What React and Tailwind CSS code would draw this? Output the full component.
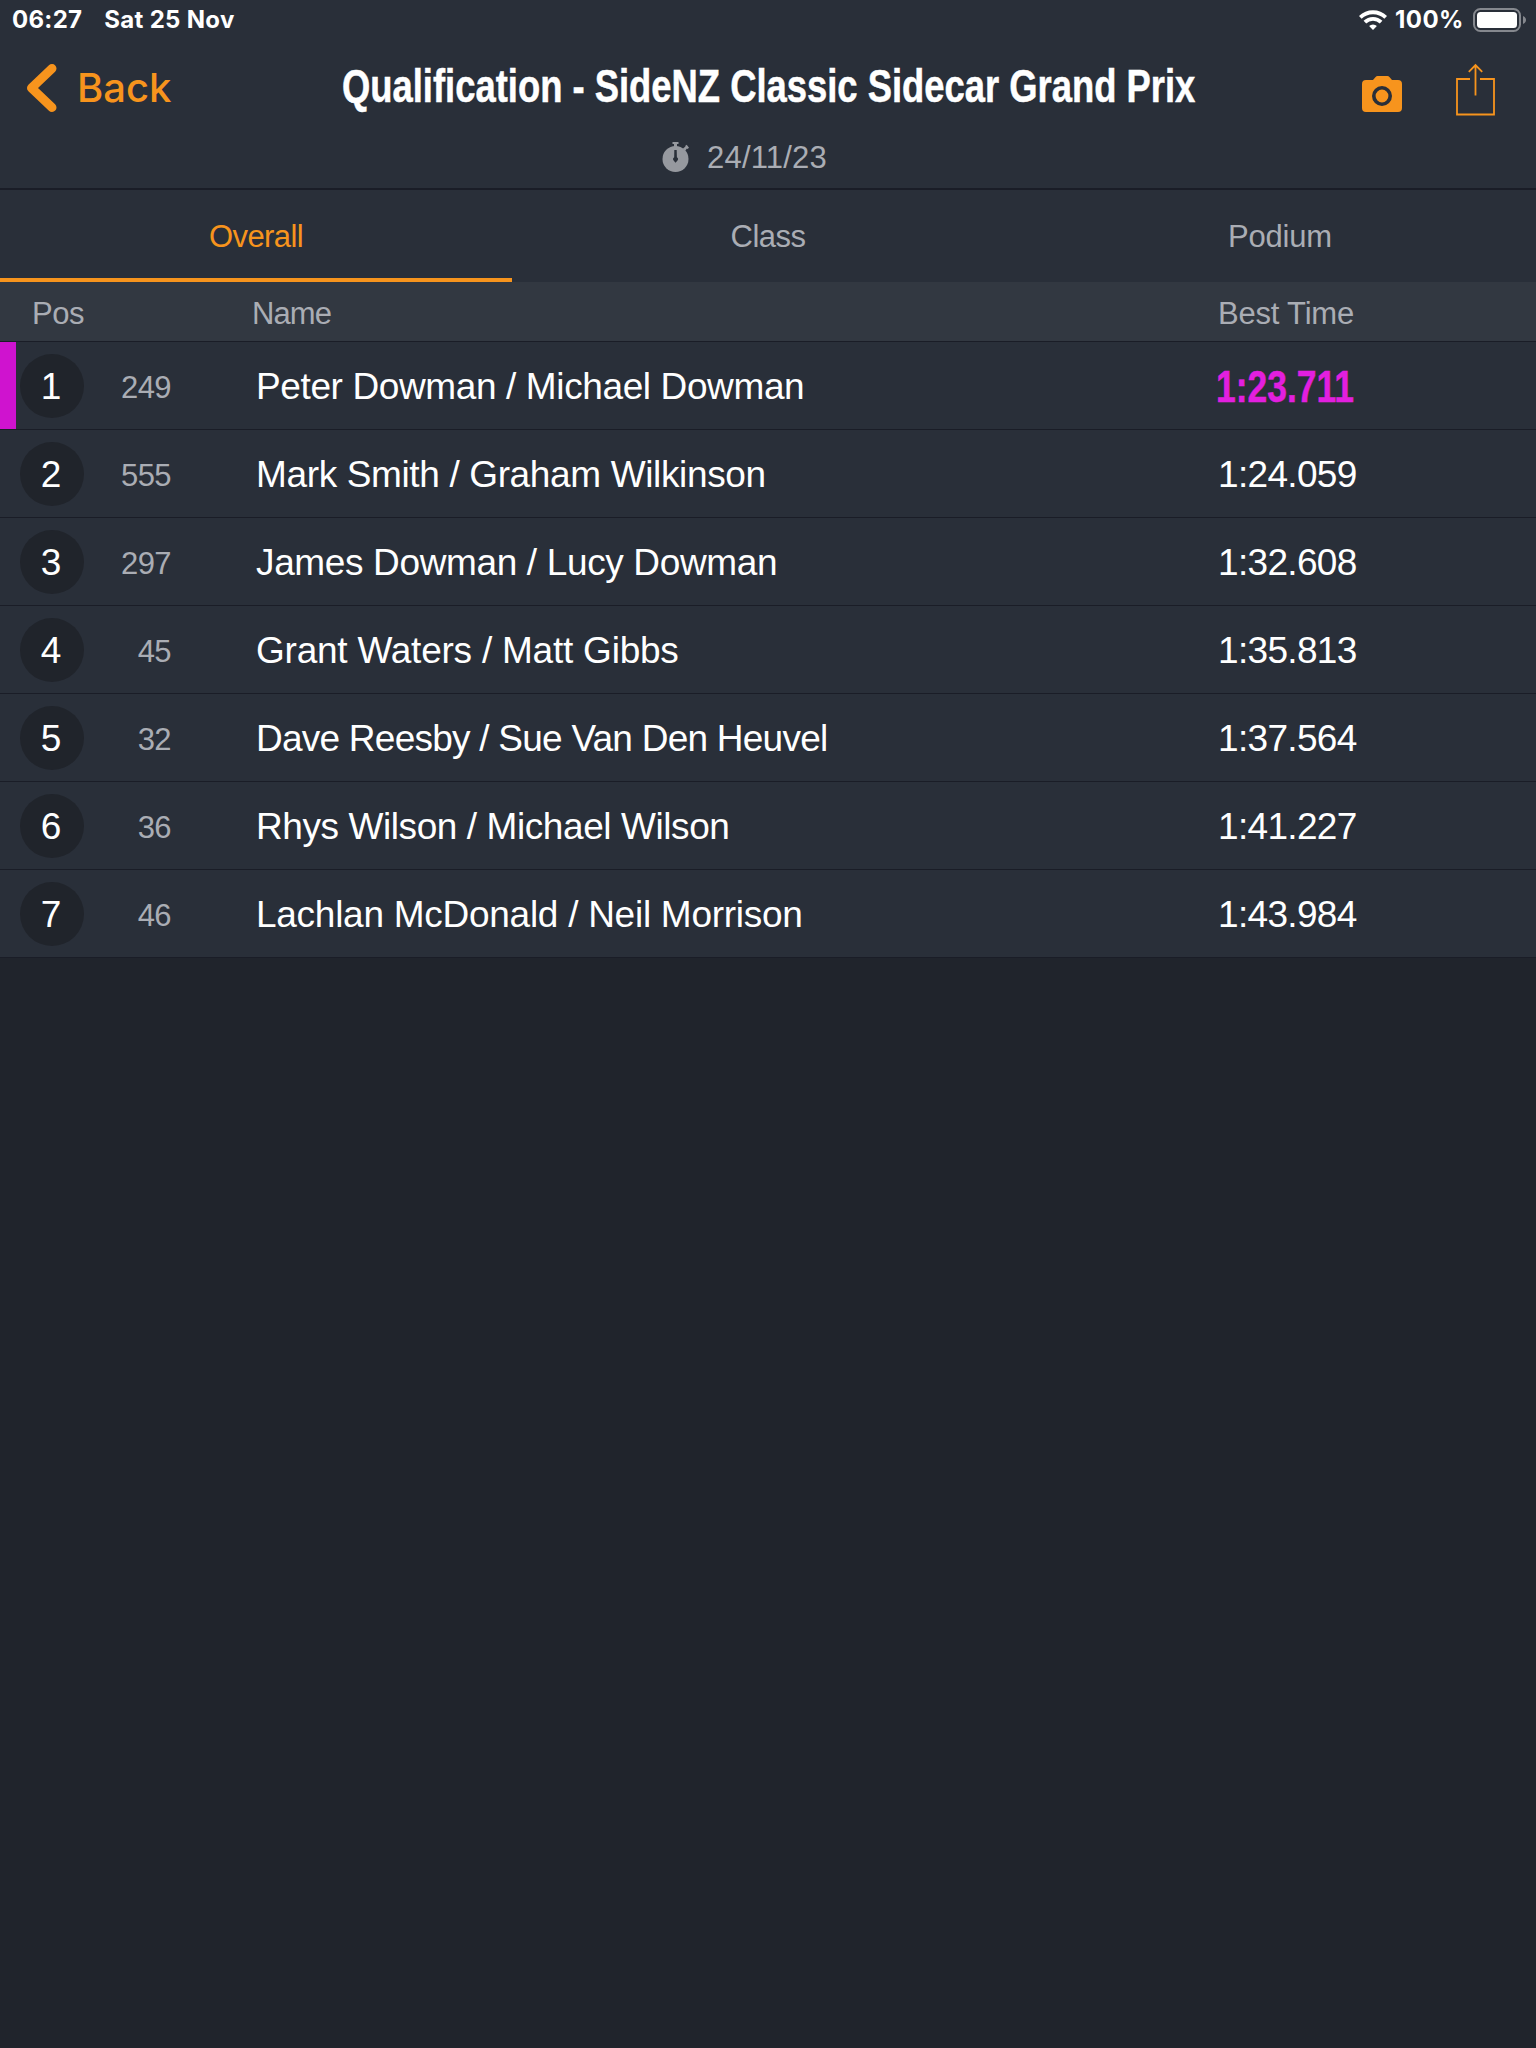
import React, { useState } from 'react';
import clsx from 'clsx';

const TABS = [
  { label: 'Overall', tracking: 'tracking-[-0.6px]' },
  { label: 'Class', tracking: 'tracking-[-0.55px]' },
  { label: 'Podium', tracking: 'tracking-[-0.2px]' },
];

const RESULTS = [
  { pos: 1, number: 249, name: 'Peter Dowman / Michael Dowman', time: '1:23.711', tracking: 'tracking-[-0.38px]', fastest: true },
  { pos: 2, number: 555, name: 'Mark Smith / Graham Wilkinson', time: '1:24.059', tracking: 'tracking-[-0.36px]' },
  { pos: 3, number: 297, name: 'James Dowman / Lucy Dowman', time: '1:32.608', tracking: 'tracking-[-0.36px]' },
  { pos: 4, number: 45, name: 'Grant Waters / Matt Gibbs', time: '1:35.813', tracking: 'tracking-[-0.23px]' },
  { pos: 5, number: 32, name: 'Dave Reesby / Sue Van Den Heuvel', time: '1:37.564', tracking: 'tracking-[-0.76px]' },
  { pos: 6, number: 36, name: 'Rhys Wilson / Michael Wilson', time: '1:41.227', tracking: 'tracking-[-0.42px]' },
  { pos: 7, number: 46, name: 'Lachlan McDonald / Neil Morrison', time: '1:43.984', tracking: 'tracking-[-0.27px]' },
];

const WifiIcon = () => (
  <svg width="28" height="20" viewBox="0 0 28 20" fill="none" stroke="#fff" strokeWidth="3.8">
    <path d="M1.3 7.4a18.2 18.2 0 0 1 25.4 0" />
    <path d="M5.9 12.1a11.6 11.6 0 0 1 16.2 0" />
    <path d="M14 20l-3.9-4a5.6 5.6 0 0 1 7.8 0z" fill="#fff" stroke="none" />
  </svg>
);

const BatteryIcon = () => (
  <svg width="54" height="24" viewBox="0 0 54 24" fill="none">
    <rect x="1" y="1" width="46" height="22" rx="6.5" stroke="#85888e" strokeWidth="2" />
    <rect x="4" y="4" width="40" height="16" rx="3.5" fill="#fff" />
    <path d="M50 8c1.8.7 3 2.2 3 4s-1.2 3.3-3 4z" fill="#85888e" />
  </svg>
);

const CameraIcon = () => (
  <svg width="40" height="36" viewBox="0 0 40 36">
    <path
      fill="#f7941d"
      d="M4 4h7l2.6-3Q14.4 0 15.6 0h9.8q1.200 0 2 1L30 4h6a4 4 0 0 1 4 4v24a4 4 0 0 1-4 4H4a4 4 0 0 1-4-4V8a4 4 0 0 1 4-4z"
    />
    <circle cx="20" cy="20" r="8.2" fill="#f7941d" stroke="#292f39" strokeWidth="3.6" />
  </svg>
);

const ShareIcon = () => (
  <svg width="40" height="54" viewBox="0 0 40 54" fill="none" stroke="#f7941d" strokeWidth="1.8">
    <path d="M15 16H2v35.5h37V16H25" />
    <path d="M20.5 32.5V2M13.8 8.8l6.7-6.8 6.7 6.8" />
  </svg>
);

const StopwatchIcon = () => (
  <svg className="-mt-0.5" width="28" height="32" viewBox="0 0 28 32">
    <circle cx="13.5" cy="18" r="13" fill="#96999f" />
    <path d="M10.5 1h6v2h-1.5v4h-3V3h-1.5zM21 7.5l2.500-2-.4-.5 1.600-1.300 2.300 3-1.500 1.300-.6-.5-1.900 2.500z" fill="#96999f" />
    <path d="M12.3 9h2.400l.2 7.300a2.300 2.300 0 0 1 .6 3.300L13.500 21.800l-1.900-2.200a2.300 2.300 0 0 1 .6-3.300z" fill="#292f39" />
  </svg>
);

const ResultRow = ({ pos, number, name, time, tracking, fastest }) => (
  <div className="flex h-22 items-start border-b border-[#1a1d27] bg-[#292f39] text-[37px] leading-[66px] text-white">
    <div className={clsx('h-full w-4', fastest && 'bg-[#cf13cf]')} />
    <div className="mt-3 ml-1 h-16 w-16 rounded-full bg-[#20242b] pr-0.5 text-center">{pos}</div>
    <div className="mt-3 w-[87px] text-right text-[31px] leading-[67px] tracking-[-0.6px] text-[#aaadb4]">{number}</div>
    <div className={clsx('mt-3 ml-[85px] flex-1 whitespace-nowrap', tracking)}>{name}</div>
    <div className="mt-3 w-[318px]">
      {fastest ? (
        <div className="-ml-0.5 w-max origin-left scale-x-[0.805] text-[44px] font-bold text-[#e21fdf] [-webkit-text-stroke:0.5px_#e21fdf]">
          {time}
        </div>
      ) : (
        <div className="w-max tracking-[-0.68px]">{time}</div>
      )}
    </div>
  </div>
);

export default function App() {
  const [activeTab, setActiveTab] = useState('Overall');

  return (
    <div className="flex h-[2048px] w-[1536px] flex-col overflow-hidden bg-[#20242c] font-['Liberation_Sans',Arial,sans-serif]">
      {/* Status bar */}
      <div className="flex h-10 items-center justify-between bg-[#292f39] pr-[9px] pl-3 font-['Inter',sans-serif] text-[24px] font-bold text-white">
        <div className="flex gap-[22px]">
          <span className="tracking-[0.3px]">06:27</span>
          <span className="tracking-[0.3px]">Sat 25 Nov</span>
        </div>
        <div className="flex items-center">
          <WifiIcon />
          <span className="ml-2 tracking-[0.5px]">100%</span>
          <span className="ml-[9px]">
            <BatteryIcon />
          </span>
        </div>
      </div>

      {/* Navigation bar */}
      <header className="h-[150px] border-b-2 border-[#1a1d27] bg-[#292f39]">
        <div className="flex h-[94px] items-center pl-[26px]">
          <button className="flex w-[316px] items-center gap-[19px] pt-px font-['Inter',sans-serif] text-[40px] font-medium text-[#f7941d]">
            <svg width="32" height="50" viewBox="0 0 32 50" fill="none" stroke="#f7941d" strokeWidth="9" strokeLinecap="round" strokeLinejoin="round">
              <path d="M26 5.5L5.5 25 26 44.5" />
            </svg>
            Back
          </button>
          <h1 className="w-[1020px] pb-px text-[46px] font-bold whitespace-nowrap text-white">
            <span className="inline-block origin-left scale-x-[0.791] [-webkit-text-stroke:0.5px_#fff]">
              Qualification - SideNZ Classic Sidecar Grand Prix
            </span>
          </h1>
          <div className="flex flex-1 items-start gap-[53px] pt-1.5">
            <div className="pt-[13px]">
              <CameraIcon />
            </div>
            <ShareIcon />
          </div>
        </div>
        <div className="flex items-center pl-[662px] text-[31px] leading-[46px] text-[#aaadb4]">
          <StopwatchIcon />
          <span className="ml-[17px] pt-px tracking-[0.2px]">24/11/23</span>
        </div>
      </header>

      {/* Tabs */}
      <nav className="flex h-[92px] bg-[#292f39]">
        {TABS.map(({ label, tracking }) => (
          <button
            key={label}
            onClick={() => setActiveTab(label)}
            className={clsx(
              'flex-1 border-b-4 pt-[6px] text-[31px]',
              tracking,
              label === activeTab ? 'border-[#f7941d] text-[#f7941d]' : 'border-transparent text-[#aaadb4]'
            )}
          >
            {label}
          </button>
        ))}
      </nav>

      {/* Column titles */}
      <div className="flex h-15 items-center border-b border-[#1a1d27] bg-[#323841] pt-[5px] pl-8 text-[31px] text-[#aaadb4]">
        <div className="w-[220px] tracking-[-0.5px]">Pos</div>
        <div className="flex-1 tracking-[-0.9px]">Name</div>
        <div className="w-[318px] tracking-[-0.2px]">Best Time</div>
      </div>

      {RESULTS.map((result) => (
        <ResultRow key={result.pos} {...result} />
      ))}
    </div>
  );
}
